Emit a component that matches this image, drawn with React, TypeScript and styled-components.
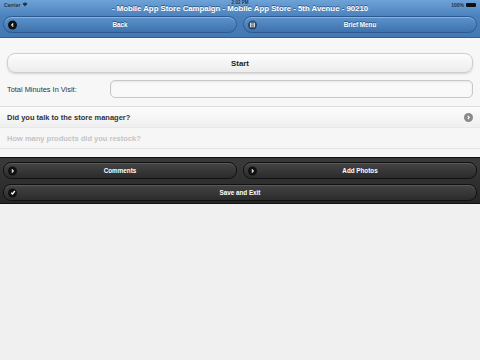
import React from "react";
import styled, { createGlobalStyle } from "styled-components";

const GlobalStyle = createGlobalStyle`
  html, body {
    margin: 0;
    padding: 0;
    background: #f0f0f0;
    font-family: Helvetica, "Liberation Sans", Arial, sans-serif;
  }
  * {
    box-sizing: border-box;
  }
`;

const Page = styled.div`
  width: 480px;
  height: 360px;
  overflow: hidden;
  background: #f0f0f0;
  display: flex;
  flex-direction: column;
`;

const Header = styled.div`
  position: relative;
  height: 38px;
  background: linear-gradient(#6ea3d8, #4a80bc 45%, #4378b4);
  border-bottom: 1px solid #2f5f94;
  display: flex;
  flex-direction: column;
`;

const StatusBar = styled.div`
  position: absolute;
  top: 0;
  left: 0;
  right: 0;
  height: 9px;
  display: flex;
  align-items: center;
  justify-content: space-between;
  padding: 0 4px;
  font-size: 5px;
  font-weight: bold;
  color: #1d3550;
`;

const Clock = styled.span`
  position: absolute;
  left: 50%;
  top: 0;
  transform: translateX(-50%);
  font-size: 4.5px;
  color: #1d3550;
`;

const Battery = styled.span`
  display: inline-flex;
  align-items: center;
  gap: 2px;
`;

const BatteryBody = styled.span`
  display: inline-block;
  width: 10px;
  height: 4px;
  background: #111;
  border-radius: 1px;
`;

const Title = styled.div`
  height: 15px;
  line-height: 17px;
  text-align: center;
  color: #fff;
  font-size: 7.8px;
  font-weight: bold;
  text-shadow: 0 -1px 0 #2d5886;
`;

const NavRow = styled.div`
  display: grid;
  grid-template-columns: 1fr 1fr;
  gap: 6px;
  padding: 1px 3px 0;
`;

const NavButton = styled.div`
  position: relative;
  height: 17px;
  border: 1px solid #2c5a8e;
  border-radius: 9px;
  background: linear-gradient(#5d93cc, #3e72ad);
  box-shadow: inset 0 1px 0 rgba(255, 255, 255, 0.3);
  color: #fff;
  font-size: 6.3px;
  font-weight: bold;
  display: flex;
  align-items: center;
  justify-content: center;
  text-shadow: 0 -1px 0 #274f7c;
`;

const IconDot = styled.span<{ $dark?: boolean }>`
  position: absolute;
  left: 4px;
  top: 50%;
  transform: translateY(-50%);
  width: 9px;
  height: 9px;
  border-radius: 50%;
  background: ${(p) => (p.$dark ? "#111" : "rgba(0,0,0,0.45)")};
  display: flex;
  align-items: center;
  justify-content: center;
`;

const Content = styled.div`
  background: #f7f7f7;
  padding: 15px 7px 0;
  display: flex;
  flex-direction: column;
`;

const StartButton = styled.div`
  height: 20px;
  border: 1px solid #cfcfcf;
  border-radius: 8px;
  background: linear-gradient(#fdfdfd, #ececec);
  box-shadow: 0 1px 2px rgba(0, 0, 0, 0.15);
  display: flex;
  align-items: center;
  justify-content: center;
  font-size: 7.8px;
  font-weight: bold;
  color: #222;
`;

const FieldRow = styled.div`
  display: flex;
  align-items: center;
  margin: 7px -7px 0;
  padding: 0 7px 8px;
  border-bottom: 1px solid #dedede;
`;

const Label = styled.label`
  width: 103px;
  font-size: 7.4px;
  color: #333;
`;

const Input = styled.div`
  flex: 1;
  height: 18px;
  border: 1px solid #c8c8c8;
  border-radius: 5px;
  background: #f9f9f9;
  box-shadow: inset 0 1px 2px rgba(0, 0, 0, 0.08);
`;

const Question = styled.div<{ $muted?: boolean }>`
  height: 21px;
  padding: 0 7px;
  display: flex;
  align-items: center;
  justify-content: space-between;
  font-size: 7.5px;
  font-weight: bold;
  color: ${(p) => (p.$muted ? "#c4c4c4" : "#333")};
  background: ${(p) =>
    p.$muted ? "#f6f6f6" : "linear-gradient(#fdfdfd, #efefef)"};
  border-bottom: 1px solid ${(p) => (p.$muted ? "#e3e3e3" : "#e8e8e8")};
`;

const Arrow = styled.span`
  width: 9px;
  height: 9px;
  border-radius: 50%;
  background: #8a8a8a;
  display: flex;
  align-items: center;
  justify-content: center;
`;

const Spacer = styled.div`
  height: 8px;
  background: #f6f6f6;
`;

const Footer = styled.div`
  background: linear-gradient(#3a3a3a, #262626);
  border-top: 1px solid #111;
  border-bottom: 1px solid #111;
  padding: 4px 3px 2px;
  display: grid;
  grid-template-columns: 1fr 1fr;
  column-gap: 6px;
  row-gap: 5px;
`;

const DarkButton = styled.div<{ $wide?: boolean }>`
  position: relative;
  grid-column: ${(p) => (p.$wide ? "1 / 3" : "auto")};
  height: 17px;
  border: 1px solid #111;
  border-radius: 8px;
  background: linear-gradient(#444, #2b2b2b);
  box-shadow: inset 0 1px 0 rgba(255, 255, 255, 0.12);
  color: #fff;
  font-size: 6.3px;
  font-weight: bold;
  display: flex;
  align-items: center;
  justify-content: center;
`;

const Chevron = ({ left }: { left?: boolean }) => (
  <svg width="5" height="5" viewBox="0 0 10 10">
    <path
      d={left ? "M6.5 2 L3.5 5 L6.5 8" : "M3.5 2 L6.5 5 L3.5 8"}
      stroke="#fff"
      strokeWidth="2.2"
      fill="none"
    />
  </svg>
);

const Check = () => (
  <svg width="6" height="6" viewBox="0 0 10 10">
    <path d="M2 5.5 L4.2 7.5 L8 2.5" stroke="#fff" strokeWidth="2.2" fill="none" />
  </svg>
);

const Grid = () => (
  <svg width="5" height="5" viewBox="0 0 10 10">
    <rect x="1" y="1" width="8" height="8" fill="none" stroke="#fff" strokeWidth="1.5" />
    <path d="M1 4 H9 M1 6.5 H9" stroke="#fff" strokeWidth="1" />
  </svg>
);

const Wifi = () => (
  <svg width="6" height="5" viewBox="0 0 12 10">
    <path d="M6 9 L1 3.5 A7 7 0 0 1 11 3.5 Z" fill="#1d3550" />
  </svg>
);

export default function App() {
  return (
    <Page>
      <GlobalStyle />
      <Header>
        <StatusBar>
          <span>
            Carrier <Wifi />
          </span>
          <Clock>2:02 PM</Clock>
          <Battery>
            100% <BatteryBody />
          </Battery>
        </StatusBar>
        <Title>- Mobile App Store Campaign - Mobile App Store - 5th Avenue - 90210</Title>
        <NavRow>
          <NavButton>
            <IconDot $dark>
              <Chevron left />
            </IconDot>
            Back
          </NavButton>
          <NavButton>
            <IconDot>
              <Grid />
            </IconDot>
            Brief Menu
          </NavButton>
        </NavRow>
      </Header>
      <Content>
        <StartButton>Start</StartButton>
        <FieldRow>
          <Label>Total Minutes In Visit:</Label>
          <Input />
        </FieldRow>
      </Content>
      <Question>
        Did you talk to the store manager?
        <Arrow>
          <Chevron />
        </Arrow>
      </Question>
      <Question $muted>How many products did you restock?</Question>
      <Spacer />
      <Footer>
        <DarkButton>
          <IconDot $dark>
            <Chevron />
          </IconDot>
          Comments
        </DarkButton>
        <DarkButton>
          <IconDot $dark>
            <Chevron />
          </IconDot>
          Add Photos
        </DarkButton>
        <DarkButton $wide>
          <IconDot $dark>
            <Check />
          </IconDot>
          Save and Exit
        </DarkButton>
      </Footer>
    </Page>
  );
}
